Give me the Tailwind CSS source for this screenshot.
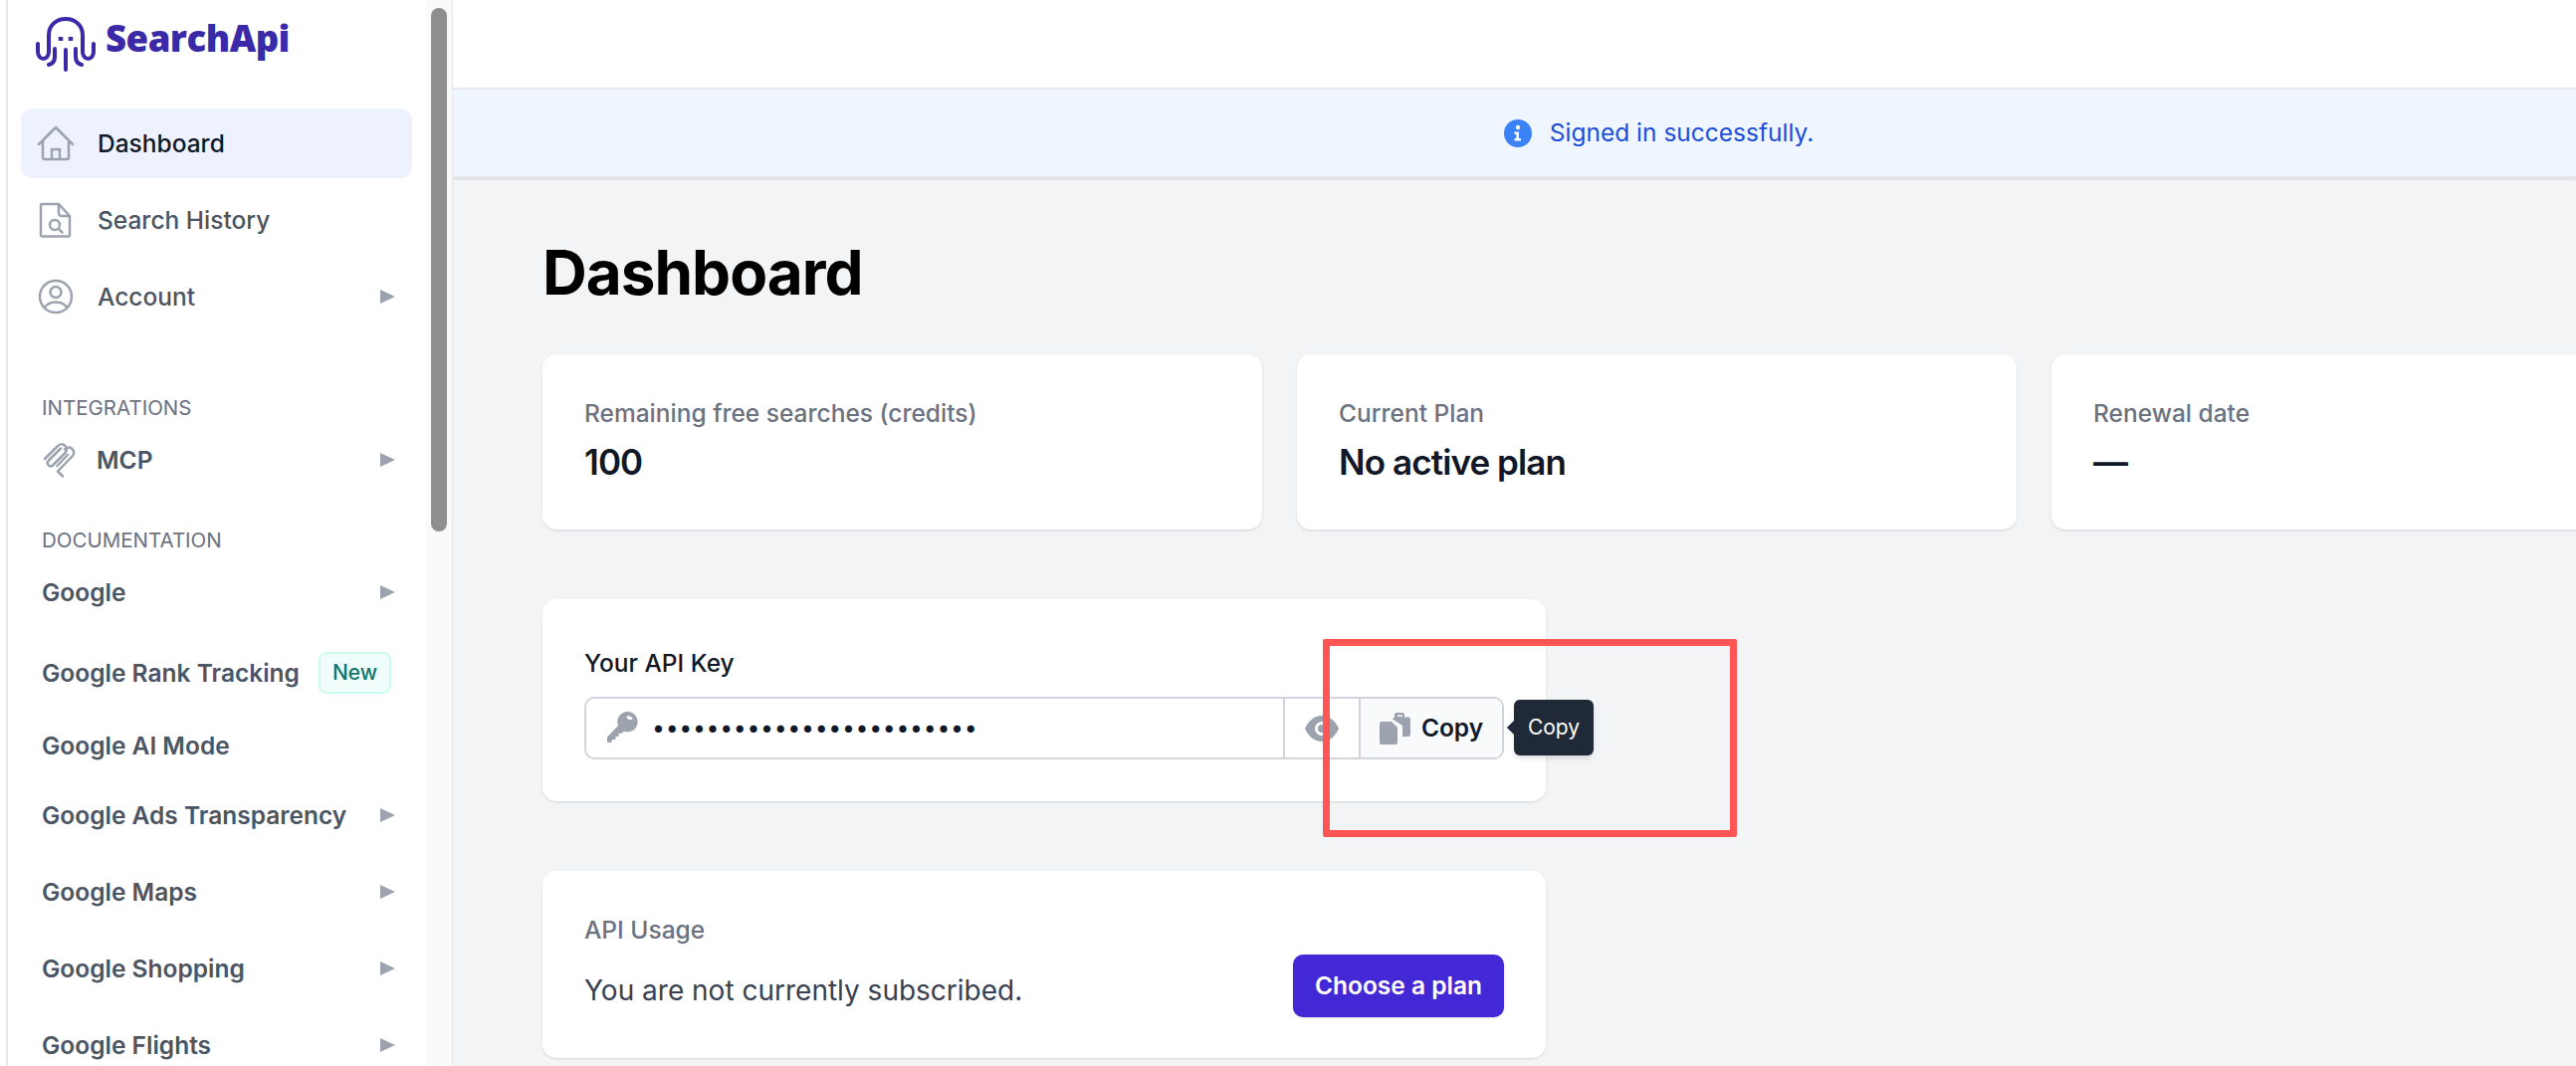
<!DOCTYPE html>
<html lang="en">
<head>
  <meta charset="UTF-8" />
  <meta name="viewport" content="width=device-width, initial-scale=1.0" />
  <title>Dashboard - SearchApi</title>
  <script src="https://cdn.jsdelivr.net/npm/@tailwindcss/browser@4"></script>
</head>
<body class="relative flex h-screen overflow-hidden bg-[#f3f4f6] font-['Inter',sans-serif] text-[24.5px]">

  <!-- sidebar -->
  <aside class="flex h-full w-[455px] shrink-0 overflow-hidden border-r border-[#e5e7eb] bg-white pl-[6px]">
    <div class="h-full w-[422px] shrink-0 overflow-hidden border-l-2 border-[#e5e7eb] pl-[13px] pr-[14px]">
      <div class="flex h-[109px] items-start pl-[14px] pt-[16px]">
        <svg class="h-[56px] w-[62px]" viewBox="34 14 62 56" fill="none" stroke="#3a2aa8" stroke-width="4" stroke-linecap="round">
          <path d="M37 42v8c0 4 2.500 7 5.500 7s5.500-3 5.500-7V33c0-9 7-16 17-16s17 7 17 16v17c0 4 2.500 7 5.500 7s5.500-3 5.500-7v-8" />
          <path d="M54 47v8c0 4-2 7-6 8M65 48v20M75 47v8c0 4 2 7 6 8" />
          <path d="M60 35v4M70 35v4" stroke-linecap="butt" stroke-width="4.500" />
        </svg>
        <span class="ml-[9px] mt-[-3px] font-['Open_Sans',sans-serif] text-[36.5px] leading-[50px] font-extrabold tracking-[-0.5px] text-[#3a2aa8]">SearchApi</span>
      </div>

      <nav class="flex flex-col gap-[7px] font-medium">
        <a class="flex h-[70px] items-center rounded-[12px] bg-[#eef2ff] pl-[16px] text-[#111827]">
          <svg class="h-[38px] w-[38px]" viewBox="0 0 38 38" fill="none" stroke="#9ca3af" stroke-width="2.500" stroke-linecap="round" stroke-linejoin="round">
            <path d="M2 20 19 3l17 17M6 16v17a2 2 0 0 0 2 2h22a2 2 0 0 0 2-2V16M15 35V25h8v10" />
          </svg>
          <span class="ml-[23px]">Dashboard</span>
        </a>
        <a class="flex h-[70px] items-center pl-[16px] text-[#4b5563]">
          <svg class="h-[38px] w-[38px]" viewBox="0 0 38 38" fill="none" stroke="#9ca3af" stroke-width="2.500" stroke-linecap="round" stroke-linejoin="round">
            <path d="M5 3h17l11 12v19a1.500 1.500 0 0 1-1.500 1.500h-26A1.500 1.500 0 0 1 4 34V4a1 1 0 0 1 1-1ZM22 3v9a3 3 0 0 0 3 3h8" />
            <circle cx="18" cy="24" r="5" />
            <path d="m22 28 3.500 3.500" />
          </svg>
          <span class="ml-[23px]">Search History</span>
        </a>
        <a class="flex h-[70px] items-center pl-[16px] pr-[17px] text-[#4b5563]">
          <svg class="h-[38px] w-[38px]" viewBox="0 0 38 38" fill="none" stroke="#9ca3af" stroke-width="2.500" stroke-linecap="round">
            <circle cx="19" cy="19" r="16" />
            <circle cx="19" cy="14.500" r="5.500" />
            <path d="M7.500 30c3-4 7-5.500 11.500-5.500S27.500 26 30.500 30" />
          </svg>
          <span class="ml-[23px] flex-1">Account</span>
          <svg class="h-[14px] w-[15px]" viewBox="0 0 15 14" fill="#9ca3af"><path d="M0 0l15 7-15 7z" /></svg>
        </a>
      </nav>

      <p class="mt-[61px] pl-[21px] text-[20.5px] leading-[32px] text-[#6b7280]">INTEGRATIONS</p>
      <a class="mt-[14px] flex h-[44px] items-center pl-[21px] pr-[17px] font-semibold text-[#4b5563]">
        <svg class="h-[38px] w-[34px]" viewBox="12 8 34 38" fill="none" stroke="#9ca3af" stroke-width="2.500" stroke-linecap="round" stroke-linejoin="round">
          <path d="M15 26 28 13a5 5 0 0 1 7.500 7L23 32.500a3.200 3.200 0 0 1-4.500-4.500L31 15.500" />
          <path d="M35 16.500a5 5 0 0 1 8 6.500L28 38.500l5 5" />
          <path d="M27.500 33 38 22" />
        </svg>
        <span class="ml-[21px] flex-1">MCP</span>
        <svg class="h-[14px] w-[15px]" viewBox="0 0 15 14" fill="#9ca3af"><path d="M0 0l15 7-15 7z" /></svg>
      </a>

      <p class="mt-[43px] pl-[21px] text-[20.5px] leading-[32px] text-[#6b7280]">DOCUMENTATION</p>

      <div class="mt-[1px] flex flex-col font-semibold text-[#4b5563]">
        <a class="flex h-[70px] items-center pl-[21px] pr-[17px]"><span class="flex-1">Google</span><svg class="h-[14px] w-[15px]" viewBox="0 0 15 14" fill="#9ca3af"><path d="M0 0l15 7-15 7z" /></svg></a>
        <a class="mt-[11px] flex h-[70px] items-center pl-[21px]">
          <span>Google Rank Tracking</span>
          <span class="ml-[19px] rounded-[8px] border-2 border-[#ccfbf1] bg-[#f0fdfa] px-[12px] py-[4px] text-[21px] leading-[30px] font-medium text-[#0f766e]">New</span>
        </a>
        <a class="mt-[3px] flex h-[70px] items-center pl-[21px]">Google AI Mode</a>
        <a class="flex h-[70px] items-center pl-[21px] pr-[17px]"><span class="flex-1">Google Ads Transparency</span><svg class="h-[14px] w-[15px]" viewBox="0 0 15 14" fill="#9ca3af"><path d="M0 0l15 7-15 7z" /></svg></a>
        <a class="mt-[7px] flex h-[70px] items-center pl-[21px] pr-[17px]"><span class="flex-1">Google Maps</span><svg class="h-[14px] w-[15px]" viewBox="0 0 15 14" fill="#9ca3af"><path d="M0 0l15 7-15 7z" /></svg></a>
        <a class="mt-[7px] flex h-[70px] items-center pl-[21px] pr-[17px]"><span class="flex-1">Google Shopping</span><svg class="h-[14px] w-[15px]" viewBox="0 0 15 14" fill="#9ca3af"><path d="M0 0l15 7-15 7z" /></svg></a>
        <a class="mt-[7px] flex h-[70px] items-center pl-[21px] pr-[17px]"><span class="flex-1">Google Flights</span><svg class="h-[14px] w-[15px]" viewBox="0 0 15 14" fill="#9ca3af"><path d="M0 0l15 7-15 7z" /></svg></a>
      </div>
    </div>

    <!-- scrollbar -->
    <div class="h-full flex-1 bg-[#fafafa] pl-[5px] pt-[8px]">
      <div class="h-[526px] w-[16px] rounded-[8px] bg-[#8f8f8f]"></div>
    </div>
  </aside>

  <!-- main column -->
  <main class="h-full min-w-0 flex-1 overflow-hidden">
    <div class="h-[88px] bg-white"></div>
    <div class="flex h-[91px] items-center justify-center border-y-2 border-[#e5e7eb] bg-[#eff6ff] pl-[290px] text-[#1d4ed8] shadow-sm">
      <svg class="h-[28px] w-[28px]" viewBox="0 0 28 28">
        <circle cx="14" cy="14" r="14" fill="#3b82f6" />
        <circle cx="14" cy="8" r="2.200" fill="#fff" />
        <path d="M10.500 12.500H15V19h2v2.500h-6.500V19h1.800v-4h-1.800z" fill="#fff" />
      </svg>
      <span class="ml-[18px]">Signed in successfully.</span>
    </div>

    <div class="pl-[90px] pt-[59px]">
      <h1 class="text-[62px] leading-[72px] font-bold tracking-[-1px] text-black">Dashboard</h1>

      <div class="mt-[46px] flex gap-[35px]">
        <div class="h-[176px] w-[723px] shrink-0 rounded-[14px] bg-white px-[42px] pt-[41px] shadow-sm">
          <p class="leading-[36px] font-medium text-[#6b7280]">Remaining free searches (credits)</p>
          <p class="mt-[6px] text-[35px] leading-[50px] font-semibold tracking-[-0.9px] text-[#111827]">100</p>
        </div>
        <div class="h-[176px] w-[723px] shrink-0 rounded-[14px] bg-white px-[42px] pt-[41px] shadow-sm">
          <p class="leading-[36px] font-medium text-[#6b7280]">Current Plan</p>
          <p class="mt-[6px] text-[35px] leading-[50px] font-semibold tracking-[-0.9px] text-[#111827]">No active plan</p>
        </div>
        <div class="h-[176px] w-[723px] shrink-0 rounded-[14px] bg-white px-[42px] pt-[41px] shadow-sm">
          <p class="leading-[36px] font-medium text-[#6b7280]">Renewal date</p>
          <p class="mt-[6px] text-[35px] leading-[50px] font-semibold tracking-[-0.9px] text-[#111827]">—</p>
        </div>
      </div>

      <div class="mt-[70px] h-[203px] w-[1008px] rounded-[14px] bg-white px-[42px] pt-[46px] shadow-sm">
        <p class="leading-[36px] font-medium text-[#111827]">Your API Key</p>
        <div class="mt-[16px] flex h-[63px] w-[924px] items-stretch rounded-[10px] border-2 border-[#d1d5db]">
          <div class="flex w-[700px] items-center pl-[21px]">
            <svg class="h-[33px] w-[31px]" viewBox="11 7 31 33" fill="#9ca3af">
              <path fill-rule="evenodd" d="M31.500 7a10.200 10.200 0 1 1-3.500 19.800L25 29h-2.500v3H19.500v3h-3l-1.500 3h-3a1 1 0 0 1-1-1v-4.500L22 21a10.200 10.200 0 0 1 9.500-14Zm2 4.500c-1.500-.5-3 0-3 1s1.500 2 3 2.500 3 0 3-1-1.500-2-3-2.500Z" />
            </svg>
            <span class="ml-[14px] text-[23px] leading-none tracking-[0.7px] text-[#111827]">••••••••••••••••••••••••</span>
          </div>
          <div class="flex w-[76px] items-center justify-center border-l-2 border-[#d1d5db]">
            <svg class="h-[26px] w-[34px]" viewBox="0 0 34 26" fill="#9ca3af">
              <path fill-rule="evenodd" d="M17 0c8 0 14 6 17 13-3 7-9 13-17 13S3 20 0 13C3 6 9 0 17 0Zm0 6a7 7 0 1 0 0 14 7 7 0 0 0 0-14Zm0 3a4 4 0 1 1 0 8 4 4 0 0 1 0-8Z" />
            </svg>
          </div>
          <div class="flex flex-1 items-center justify-center rounded-r-[8px] border-l-2 border-[#d1d5db] bg-[#f9fafb] font-semibold text-[#111827]">
            <svg class="h-[32px] w-[31px]" viewBox="10 9 31 32" fill="#9ca3af">
              <path d="M12 18h10l6 6v15a2 2 0 0 1-2 2H12a2 2 0 0 1-2-2V20a2 2 0 0 1 2-2Z" />
              <path fill-rule="evenodd" d="M27 9h6a2 2 0 0 1 2 2v2.500h4a2 2 0 0 1 2 2V31a2 2 0 0 1-2 2h-6V22L23 15.500l2-2V11a2 2 0 0 1 2-2Zm1 2.500V13h5v-1.500z" />
            </svg>
            <span class="ml-[11px]">Copy</span>
          </div>
        </div>
      </div>

      <div class="mt-[70px] flex h-[188px] w-[1008px] items-end justify-between rounded-[14px] bg-white px-[42px] pb-[48px] shadow-sm">
        <div>
          <p class="leading-[36px] font-medium text-[#6b7280]">API Usage</p>
          <p class="mt-[23px] text-[28px] leading-[40px] text-[#374151]">You are not currently subscribed.</p>
        </div>
        <button class="mb-[-7px] h-[63px] rounded-[10px] bg-[#4329d6] px-[22px] font-semibold text-white shadow-sm">Choose a plan</button>
      </div>
    </div>
  </main>

  <!-- tooltip -->
  <div class="absolute left-[1521px] top-[703px] flex h-[56px] w-[80px] items-center justify-center rounded-[6px] bg-[#1f2937] text-[21px] text-white shadow-md">
    <span class="absolute left-[-5px] top-[23px] h-[10px] w-[10px] rotate-45 bg-[#1f2937]"></span>
    Copy
  </div>

  <!-- annotation -->
  <div class="absolute left-[1329px] top-[642px] h-[199px] w-[416px] rounded-[2px] border-[7px] border-[#ff5555]"></div>
</body>
</html>
